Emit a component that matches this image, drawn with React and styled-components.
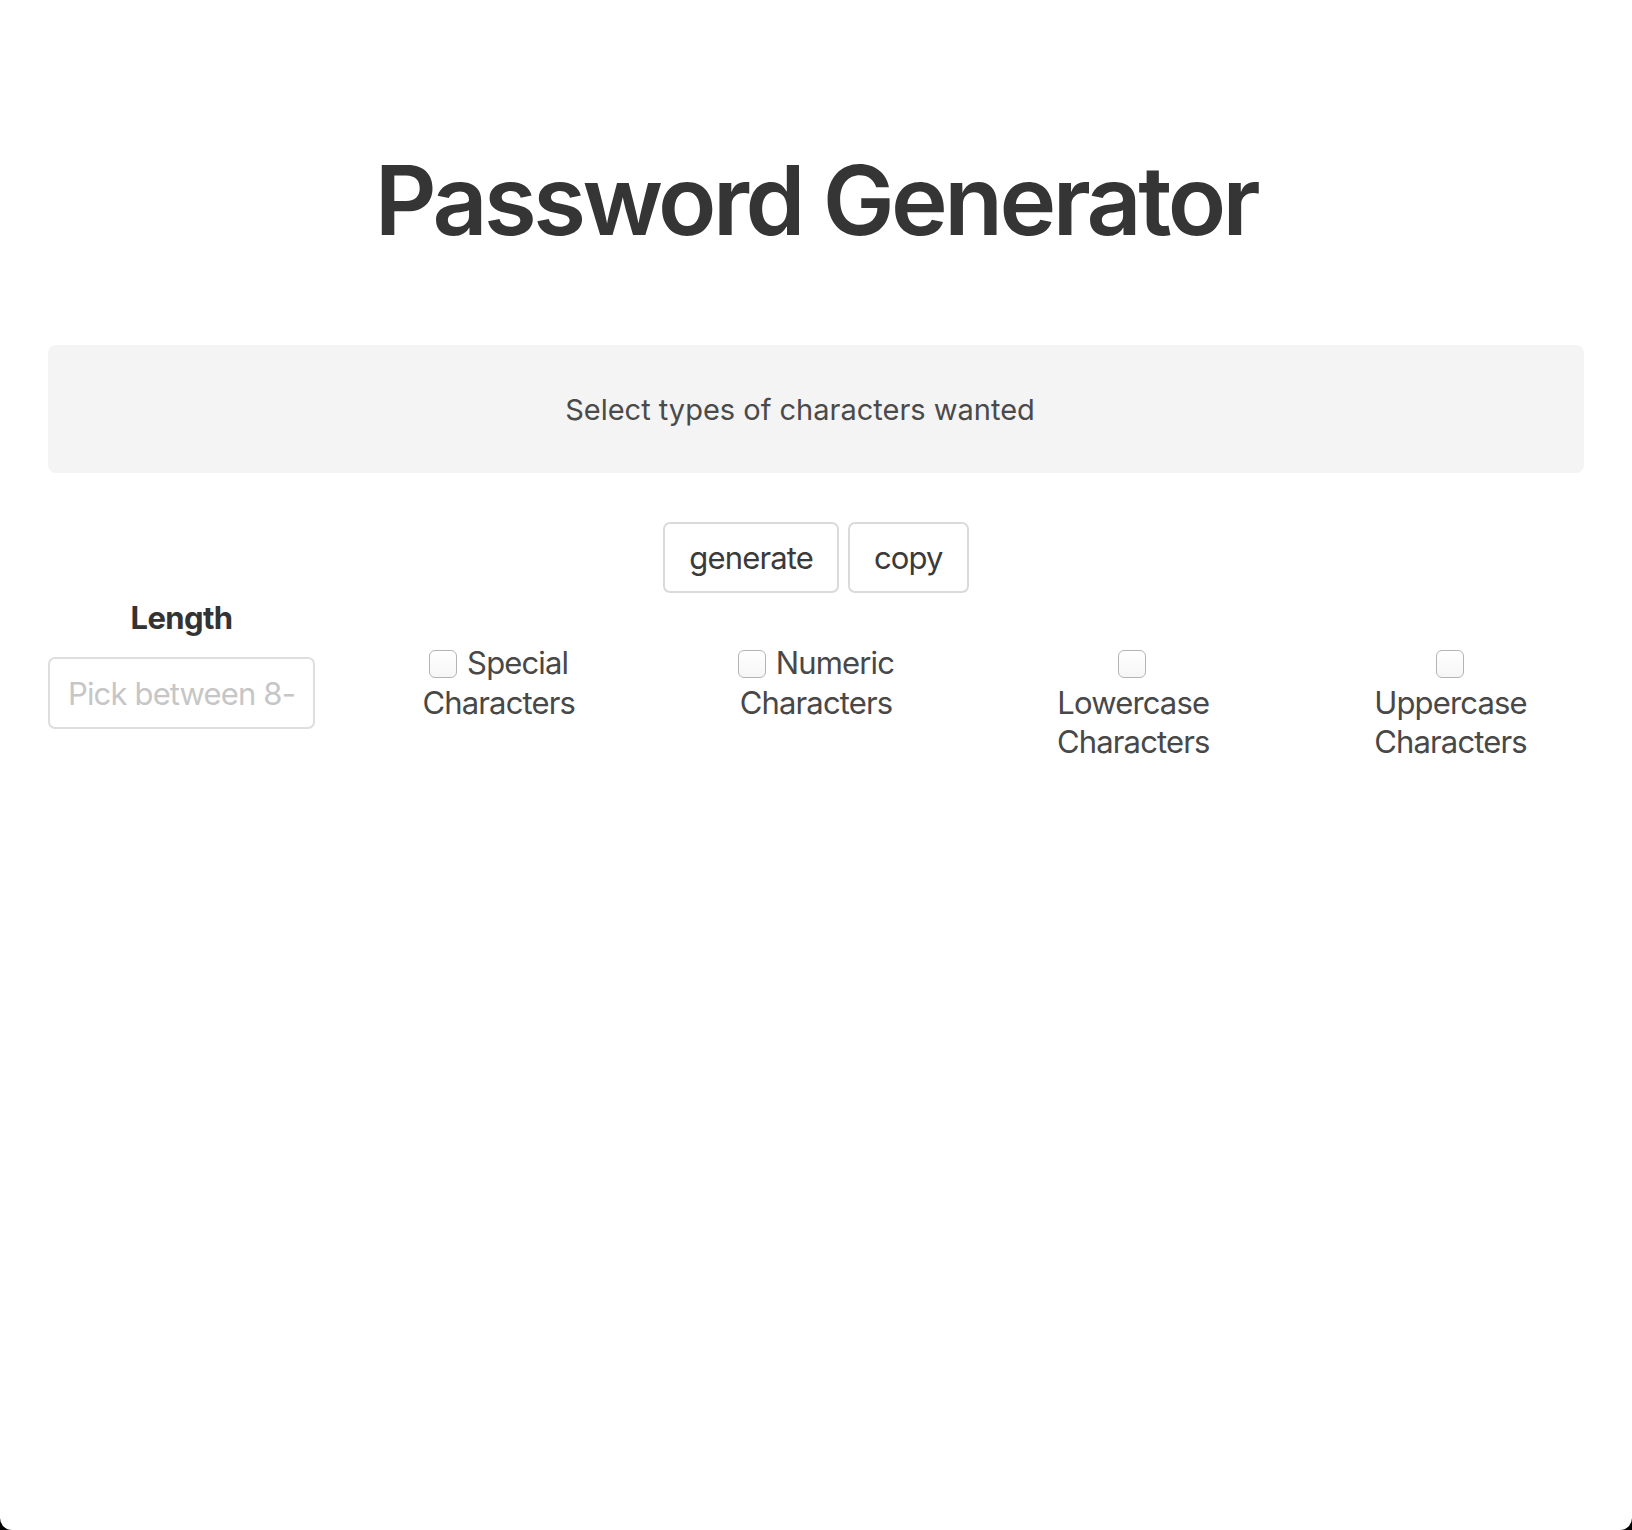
import React from "react";
import styled, { createGlobalStyle } from "styled-components";

const GlobalStyle = createGlobalStyle`
  html, body {
    margin: 0;
    padding: 0;
    background: #000;
  }
  body {
    font-family: Inter, "Noto Sans", "Liberation Sans", sans-serif;
    color: #484848;
  }
`;

const Page = styled.div`
  min-height: 1530px;
  background: #fff;
  border-radius: 0 0 12px 12px;
  padding: 142px 48px 0;
  box-sizing: border-box;
`;

const Title = styled.h1`
  margin: 0;
  text-align: center;
  font-size: 96px;
  font-weight: 600;
  letter-spacing: -3.5px;
  line-height: normal;
  color: #353535;
`;

const Output = styled.div`
  margin-top: 87px;
  height: 128px;
  border-radius: 8px;
  background: #f4f4f4;
  display: flex;
  align-items: center;
  justify-content: center;
  padding-right: 32px;
  font-size: 29px;
  color: #4a4a4a;
`;

const Buttons = styled.div`
  margin-top: 49px;
  display: flex;
  justify-content: center;
  gap: 9px;
`;

const Button = styled.button`
  height: 71px;
  padding: 0 24px;
  background: #fff;
  border: 2px solid #dadada;
  border-radius: 7px;
  font-family: inherit;
  font-size: 31px;
  letter-spacing: -0.85px;
  color: #3a3a3a;
  cursor: pointer;
`;

const Options = styled.div`
  margin-top: 5px;
  display: grid;
  grid-template-columns: repeat(5, 267px);
  justify-content: space-between;
`;

const LengthCol = styled.div`
  display: flex;
  flex-direction: column;
  align-items: center;
`;

const Label = styled.label`
  font-size: 31px;
  font-weight: 700;
  letter-spacing: -0.6px;
  color: #333;
  line-height: 39px;
`;

const LengthInput = styled.input`
  margin-top: 20px;
  width: 267px;
  height: 72px;
  box-sizing: border-box;
  border: 2px solid #dedede;
  border-radius: 7px;
  padding: 0 18px;
  font-family: inherit;
  font-size: 31px;
  letter-spacing: -0.85px;
  color: #333;
  &::placeholder {
    color: #c6c6c6;
  }
`;

const OptionCol = styled.div`
  padding-top: 45px;
  display: flex;
  justify-content: center;
`;

const OptionText = styled.label`
  width: 165px;
  text-align: center;
  font-size: 31px;
  letter-spacing: -0.85px;
  line-height: 39.5px;
  color: #484848;
`;

const Check = styled.input.attrs({ type: "checkbox" })`
  appearance: none;
  -webkit-appearance: none;
  width: 28px;
  height: 28px;
  margin: 0 2px 0 0;
  box-sizing: border-box;
  border: 1.5px solid #b4b4b4;
  border-radius: 6px;
  background: linear-gradient(#fff, #f6f6f6);
  vertical-align: -4px;
`;

const options = [
  "Special Characters",
  "Numeric Characters",
  "Lowercase Characters",
  "Uppercase Characters",
];

export default function App() {
  return (
    <>
      <GlobalStyle />
      <Page>
        <Title>Password Generator</Title>
        <Output>Select types of characters wanted</Output>
        <Buttons>
          <Button>generate</Button>
          <Button>copy</Button>
        </Buttons>
        <Options>
          <LengthCol>
            <Label htmlFor="length">Length</Label>
            <LengthInput id="length" placeholder="Pick between 8-128" />
          </LengthCol>
          {options.map((o) => (
            <OptionCol key={o}>
              <OptionText>
                <Check /> {o}
              </OptionText>
            </OptionCol>
          ))}
        </Options>
      </Page>
    </>
  );
}
